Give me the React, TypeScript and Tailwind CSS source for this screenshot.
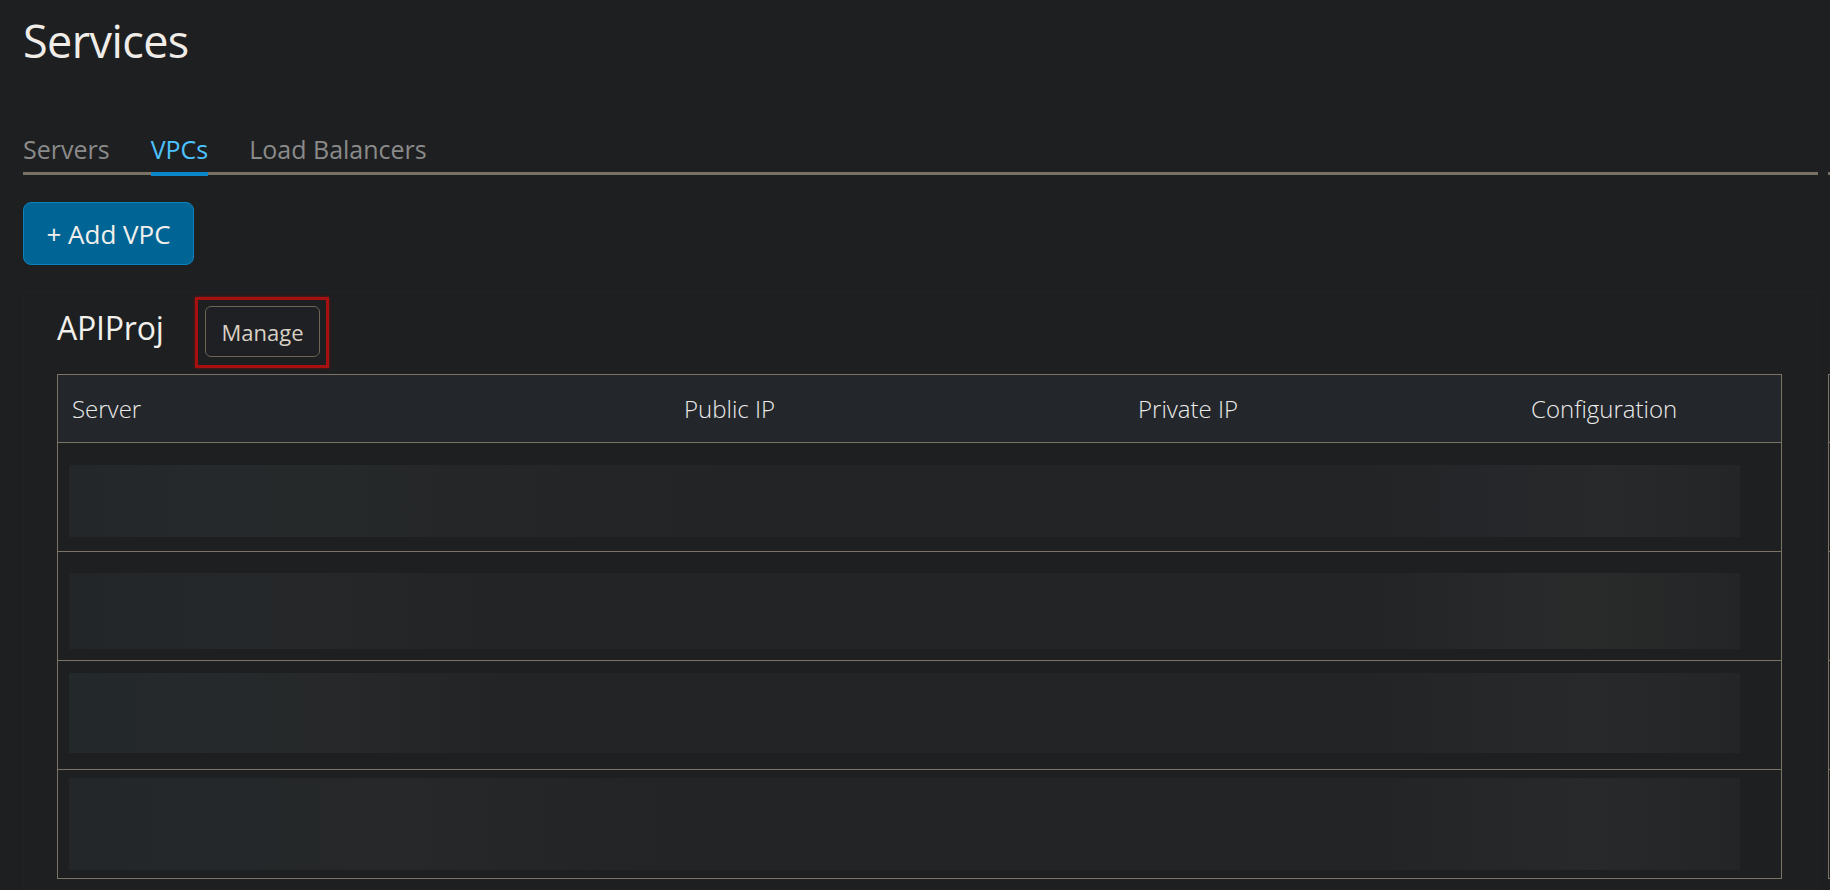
import React from "react";

const rows = [
  { pt: "pt-[22px]", h: "h-[72px]", bg: "bg-[linear-gradient(90deg,#232729_0%,#25292b_8%,#26292a_16%,#242627_24%,#232426_40%,#232426_78%,#25272a_86%,#27292a_92%,#242526_100%)]" },
  { pt: "pt-[21px]", h: "h-[76px]", bg: "bg-[linear-gradient(90deg,#232628_0%,#25282a_9%,#252729_15%,#232426_26%,#232426_78%,#26282a_85%,#292b2b_91%,#242526_100%)]" },
  { pt: "pt-[12px]", h: "h-[80px]", bg: "bg-[linear-gradient(90deg,#23282a_0%,#25292b_8%,#262829_16%,#232426_26%,#232426_78%,#252729_85%,#28292a_91%,#242526_100%)]" },
  { pt: "pt-[8px]", h: "h-[92px]", bg: "bg-[linear-gradient(90deg,#232729_0%,#25282a_10%,#262829_20%,#242526_30%,#232426_40%,#232426_78%,#252729_85%,#28292a_91%,#242526_100%)]" },
];

export default function App() {
  return (
    <div className="flex w-[1830px] h-[890px] overflow-hidden bg-[#1e1f21] font-['Open_Sans',sans-serif]">
      {/* Main panel */}
      <div className="w-[1818px] shrink-0 pl-[23px] flex flex-col">
        <h1 className="mt-[19px] h-[44px] text-[45px] leading-[44px] text-[#f0ede8] font-normal tracking-[-0.6px]">
          Services
        </h1>

        {/* Tabs */}
        <div className="mt-[74px] flex gap-[41px] border-b-[3px] border-[#7b7266]">
          <div className="pb-[11px] text-[25px] leading-[24px] text-[#8a8a8a]">Servers</div>
          <div className="pb-[11px] -mb-[4px] border-b-4 border-[#0a86c9] text-[25px] leading-[24px] text-[#4cc2ff]">
            VPCs
          </div>
          <div className="pb-[11px] text-[25px] leading-[24px] text-[#8a8a8a]">Load Balancers</div>
        </div>

        {/* Add VPC */}
        <div className="mt-[27px]">
          <button className="w-[171px] h-[63px] rounded-[8px] bg-[#006595] border border-[#0b82bd] flex items-center justify-center text-[26px] leading-[26px] text-[#f2f0ec]">
            + Add VPC
          </button>
        </div>

        {/* Card */}
        <div className="mt-[27px] border border-[#212224] pl-[33px] pr-[35px] h-[600px]">
          <div className="flex items-start pt-[4px]">
            <div className="w-[138px] mt-[15px] text-[32px] leading-[32px] text-[#f2f0ec] tracking-[-0.2px]">APIProj</div>
            <div className="border-[3px] border-[#a80f0f] pt-[6px] pl-[7px] pr-[6px] pb-[8px] shadow-[0_0_3px_rgba(168,15,15,0.6)]">
              <div className="w-[115px] h-[51px] rounded-[6px] border border-[#6b6457] bg-[#1f2023] flex items-center justify-center text-[22px] leading-[22px] text-[#d8d0c4]">
                Manage
              </div>
            </div>
          </div>

          {/* Table */}
          <div className="mt-[6px] border border-[#7b7365]">
            <div className="grid grid-cols-[612px_454px_393px_1fr] h-[68px] bg-[#23262a] border-b border-[#7b7365] items-center text-[24px] leading-[24px] font-light text-[#ecebea]">
              <div className="pl-[14px]">Server</div>
              <div className="pl-[14px]">Public IP</div>
              <div className="pl-[14px]">Private IP</div>
              <div className="pl-[14px]">Configuration</div>
            </div>
            {rows.map((r, i) => (
              <div
                key={i}
                className={`flex flex-col bg-[#1e1f21] pl-[11px] pr-[41px] ${r.pt} ${i < rows.length - 1 ? "h-[109px] border-b border-[#7b7365]" : "h-[108px]"}`}
              >
                <div className={`shrink-0 ${r.h} ${r.bg}`} />
              </div>
            ))}
          </div>
        </div>
      </div>

      {/* Next panel sliver */}
      <div className="w-[300px] shrink-0 pl-[10px] flex flex-col">
        <div className="mt-[172px] border-t-[3px] border-[#7b7266]" />
        <div className="mt-[199px] border-l border-t border-[#7b7365]">
          <div className="h-[68px] bg-[#23262a] border-b border-[#7b7365]" />
          <div className="h-[109px] border-b border-[#7b7365]" />
          <div className="h-[109px] border-b border-[#7b7365]" />
          <div className="h-[109px] border-b border-[#7b7365]" />
          <div className="h-[109px] border-b border-[#7b7365]" />
        </div>
      </div>
    </div>
  );
}
